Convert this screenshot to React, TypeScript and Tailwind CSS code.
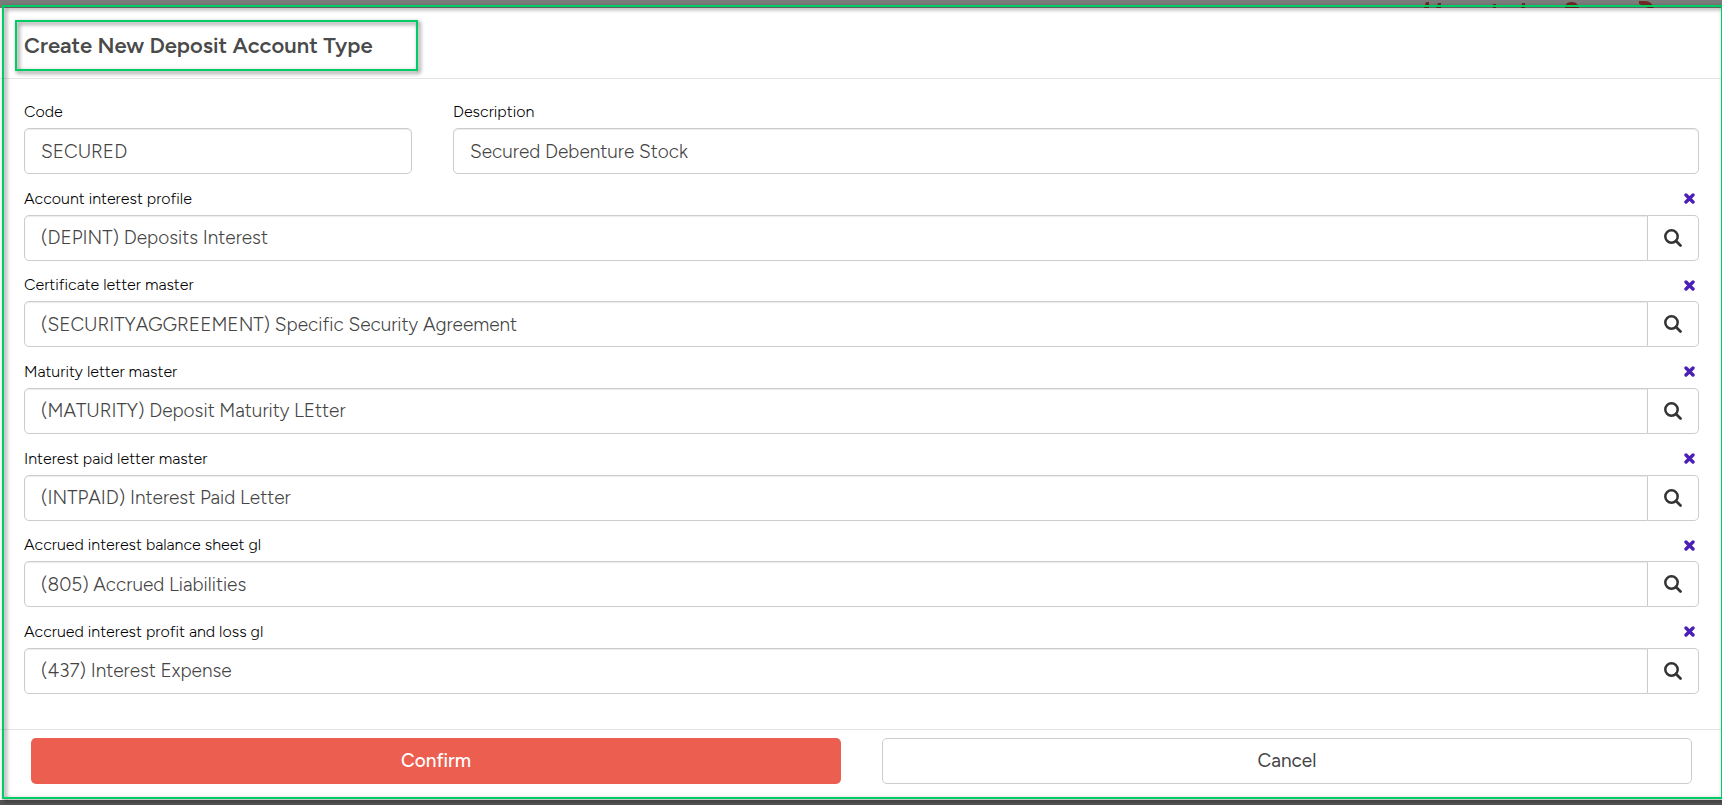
import { useId, useState } from "react";

interface LookupFieldProps {
  label: string;
  initialValue: string;
}

const lookups: LookupFieldProps[] = [
  { label: "Account interest profile", initialValue: "(DEPINT) Deposits Interest" },
  { label: "Certificate letter master", initialValue: "(SECURITYAGGREEMENT) Specific Security Agreement" },
  { label: "Maturity letter master", initialValue: "(MATURITY) Deposit Maturity LEtter" },
  { label: "Interest paid letter master", initialValue: "(INTPAID) Interest Paid Letter" },
  { label: "Accrued interest balance sheet gl", initialValue: "(805) Accrued Liabilities" },
  { label: "Accrued interest profit and loss gl", initialValue: "(437) Interest Expense" },
];

const inputClass =
  "block h-[46px] w-full min-w-0 border border-[#ccc] bg-white px-4 text-[19px] font-light text-[#444] shadow-[inset_0_1px_1px_rgba(0,0,0,0.08)] focus:outline-none focus:border-[#4a1fb8]";

const labelClass = "text-base leading-6 font-light text-black";

function TextField({ label, initialValue }: LookupFieldProps) {
  const id = useId();
  const [value, setValue] = useState(initialValue);

  return (
    <div className="flex flex-col gap-1">
      <label htmlFor={id} className={labelClass}>
        {label}
      </label>
      <input id={id} className={`${inputClass} rounded-[5px]`} value={value} onChange={(e) => setValue(e.target.value)} />
    </div>
  );
}

function LookupField({ label, initialValue }: LookupFieldProps) {
  const id = useId();
  const [value, setValue] = useState(initialValue);

  return (
    <div className="flex flex-col gap-1">
      <div className="flex items-center justify-between pr-1">
        <label htmlFor={id} className={labelClass}>
          {label}
        </label>
        <button type="button" aria-label={`Clear ${label}`} onClick={() => setValue("")}>
          <svg viewBox="0 0 11 11" className="h-[11px] w-[11px]" fill="none" stroke="#4a1fb8" strokeWidth="3.4" strokeLinecap="round">
            <path d="M2 2 9 9M9 2 2 9" />
          </svg>
        </button>
      </div>
      <div className="flex">
        <input id={id} className={`${inputClass} rounded-l-[5px]`} value={value} onChange={(e) => setValue(e.target.value)} />
        <button
          type="button"
          aria-label={`Search ${label}`}
          className="flex w-[51px] shrink-0 items-center justify-center rounded-r-[5px] border border-l-0 border-[#ccc] bg-white"
        >
          <svg viewBox="0 0 18 18" className="h-[18px] w-[18px]" fill="none" stroke="#333">
            <circle cx="7.5" cy="7.5" r="6.2" strokeWidth="2.5" />
            <path d="m12 12 4.5 4.5" strokeWidth="2.7" strokeLinecap="round" />
          </svg>
        </button>
      </div>
    </div>
  );
}

export default function App() {
  return (
    <div className="relative flex min-h-screen flex-col bg-[#555] font-[Figtree,Inter,sans-serif] text-[#444]">
      {/* Dimmed page behind the dialog */}
      <div className="flex h-2 shrink-0 justify-end bg-[#7b7b7b]">
        <svg viewBox="0 0 300 8" className="h-2 w-[300px]" fill="#702a22">
          <path d="M2 8 4 2h3v6zM14 8l2-5h3v5zM71 8V4h3v4zM99 8l1-5h3v5zM143 8q0-2 2-5 5-2 9 0 2 2 3 5zM217 1h7q6 1 8 7h-6l-9-4z" />
        </svg>
      </div>

      <form className="flex flex-1 flex-col bg-white" onSubmit={(e) => e.preventDefault()}>
        <header className="border-b border-[#e5e5e5] pt-3 pb-[7px] pl-[15px]">
          <h1 className="relative flex h-[51px] w-[403px] items-center pl-[9px] text-[22px] font-semibold text-[#4a4a4a]">
            Create New Deposit Account Type
            <span className="pointer-events-none absolute inset-0 border-2 border-[#00cc66] drop-shadow-[2px_2px_2px_rgba(0,0,0,0.6)]" />
          </h1>
        </header>

        <div className="flex flex-1 flex-col justify-between gap-3 pt-[21px] pr-[23px] pb-[35px] pl-6">
          <div className="grid grid-cols-[388fr_1246fr] gap-[41px]">
            <TextField label="Code" initialValue="SECURED" />
            <TextField label="Description" initialValue="Secured Debenture Stock" />
          </div>
          {lookups.map((field) => (
            <LookupField key={field.label} {...field} />
          ))}
        </div>

        <footer className="grid grid-cols-2 gap-[41px] border-t border-[#e5e5e5] pt-2 pr-[30px] pb-4 pl-[31px]">
          <button type="submit" className="h-[46px] rounded-[5px] bg-[#ec5e4f] text-[19px] font-medium text-white">
            Confirm
          </button>
          <button type="button" className="h-[46px] rounded-[5px] border border-[#ccc] bg-white text-[19px]">
            Cancel
          </button>
        </footer>
      </form>
      <div className="h-[5px] shrink-0" />

      {/* Highlight frame */}
      <div className="pointer-events-none absolute top-[5px] right-0 bottom-[6px] left-[2px] border-2 border-r border-[#00cc66] drop-shadow-[2px_2px_2px_rgba(0,0,0,0.6)]" />
    </div>
  );
}
